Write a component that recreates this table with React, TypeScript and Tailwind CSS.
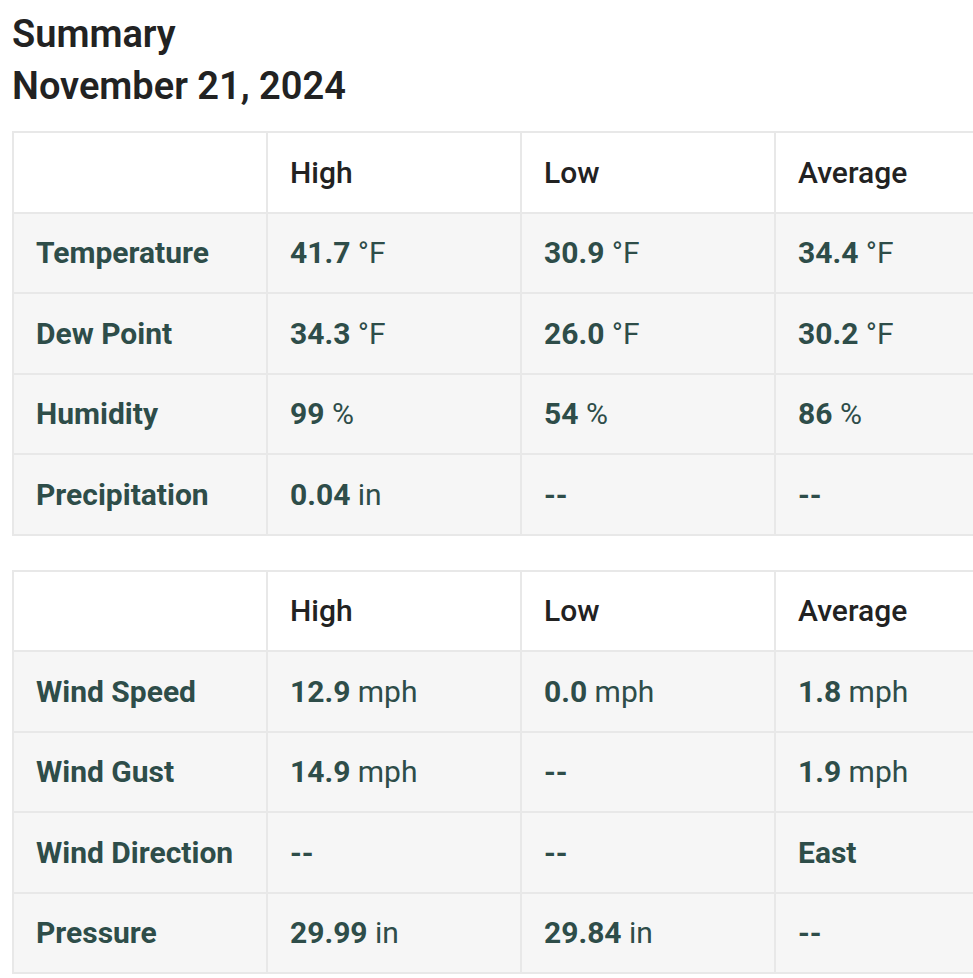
const tables = [
  [
    { label: 'Temperature', values: [['41.7', '°F'], ['30.9', '°F'], ['34.4', '°F']] },
    { label: 'Dew Point', values: [['34.3', '°F'], ['26.0', '°F'], ['30.2', '°F']] },
    { label: 'Humidity', values: [['99', '%'], ['54', '%'], ['86', '%']] },
    { label: 'Precipitation', values: [['0.04', 'in'], null, null] },
  ],
  [
    { label: 'Wind Speed', values: [['12.9', 'mph'], ['0.0', 'mph'], ['1.8', 'mph']] },
    { label: 'Wind Gust', values: [['14.9', 'mph'], null, ['1.9', 'mph']] },
    { label: 'Wind Direction', values: [null, null, ['East', '']] },
    { label: 'Pressure', values: [['29.99', 'in'], ['29.84', 'in'], null] },
  ],
];

type Row = { label: string; values: (string[] | null)[] };

const SummaryTable = ({ rows }: { rows: Row[] }) => (
  <table className="w-[1018px] table-fixed border-collapse border-2 border-[#e8e8e8]">
    <thead>
      <tr className="h-[80.5px] bg-white">
        {['', 'High', 'Low', 'Average'].map((h, i) => (
          <th
            key={i}
            className="w-[254px] border-2 border-[#e8e8e8] px-[22px] text-left text-[30px] font-medium text-[#222]"
          >
            {h}
          </th>
        ))}
      </tr>
    </thead>
    <tbody>
      {rows.map((row) => (
        <tr key={row.label} className="h-[80.5px] bg-[#f6f6f6]">
          <td className="border-2 border-[#e8e8e8] px-[22px] text-[30px] font-bold text-[#2e4d49]">
            {row.label}
          </td>
          {row.values.map((v, i) => (
            <td
              key={i}
              className="border-2 border-[#e8e8e8] px-[22px] text-[30px] text-[#2e4d49]"
            >
              {v ? (
                <>
                  <span className="font-bold">{v[0]}</span>
                  {v[1] && <span className="font-normal"> {v[1]}</span>}
                </>
              ) : (
                <span className="font-bold">--</span>
              )}
            </td>
          ))}
        </tr>
      ))}
    </tbody>
  </table>
);

export default function App() {
  return (
    <div
      className="h-[978px] w-[973px] overflow-hidden bg-white pl-3 pt-[8px]"
      style={{ fontFamily: 'Roboto, "Liberation Sans", sans-serif' }}
    >
      <h1 className="text-[38px] font-semibold leading-[52px] text-[#222]">
        Summary
        <br />
        November 21, 2024
      </h1>
      <div className="mt-[19px] flex flex-col gap-[34px]">
        {tables.map((rows, i) => (
          <SummaryTable key={i} rows={rows} />
        ))}
      </div>
    </div>
  );
}
